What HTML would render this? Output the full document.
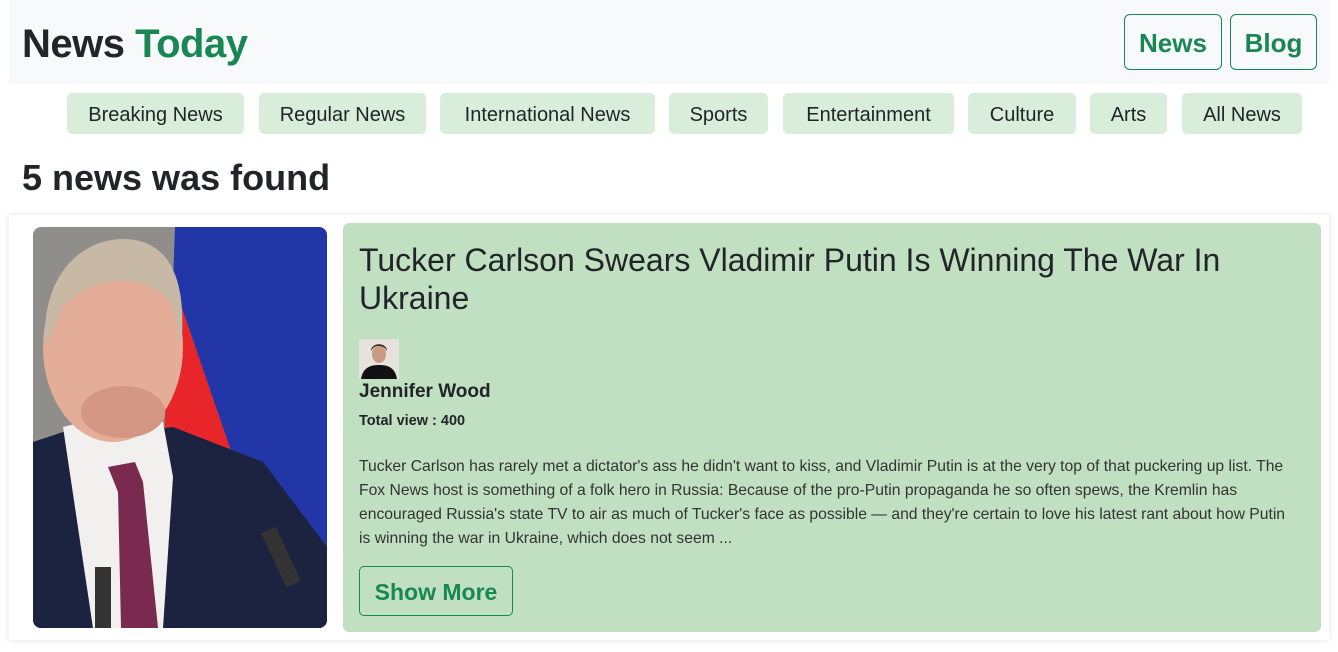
<!DOCTYPE html>
<html><head><meta charset="utf-8"><style>
*{margin:0;padding:0;box-sizing:border-box}
body{width:1338px;height:652px;background:#fff;font-family:"Liberation Sans",sans-serif;color:#212529;position:relative;overflow:hidden}
.hdr{position:absolute;left:9px;top:0;width:1320px;height:84px;background:#f8f9fa}
.logo{position:absolute;left:22px;top:22px;font-size:40px;font-weight:bold;letter-spacing:-0.5px}
.logo span{color:#198754}
.nb{position:absolute;top:14px;height:56px;border:1px solid #198754;border-radius:6px;color:#198754;font-weight:bold;font-size:26px;display:flex;align-items:center;justify-content:center;padding-top:2px}
.pill{position:absolute;top:93px;height:41px;background:#d9eddb;border-radius:5px;font-size:20px;display:flex;align-items:center;justify-content:center;white-space:nowrap;padding-top:3px}
.h{position:absolute;left:22px;top:157px;font-size:36px;font-weight:bold}
.card{position:absolute;left:9px;top:215px;width:1320px;height:425px;background:#fff;box-shadow:0 0 6px rgba(0,0,0,.12)}
.img{position:absolute;left:33px;top:227px;width:294px;height:401px;border-radius:8px;overflow:hidden}
.panel{position:absolute;left:343px;top:223px;width:978px;height:409px;background:#c1e0c1;border-radius:6px}
.t{position:absolute;left:359px;top:241px;font-size:32px;line-height:38px;width:940px}
.av{position:absolute;left:359px;top:339px;width:40px;height:40px;overflow:hidden}
.nm{position:absolute;left:359px;top:381px;font-size:19px;font-weight:bold}
.tv{position:absolute;left:359px;top:413px;font-size:14.5px;font-weight:bold}
.p{position:absolute;left:359px;top:455px;font-size:15.7px;line-height:24px;white-space:nowrap;color:#333}
.sm{position:absolute;left:359px;top:566px;width:154px;height:50px;border:1px solid #198754;border-radius:5px;color:#198754;font-size:23px;font-weight:bold;display:flex;align-items:center;justify-content:center;padding-top:2px}
</style></head><body>
<div class="hdr"></div>
<div class="logo">News <span>Today</span></div>
<div class="nb" style="left:1124px;width:98px">News</div>
<div class="nb" style="left:1230px;width:87px">Blog</div>
<div class="pill" style="left:67px;width:177px">Breaking News</div>
<div class="pill" style="left:259px;width:167px">Regular News</div>
<div class="pill" style="left:440px;width:215px">International News</div>
<div class="pill" style="left:669px;width:99px">Sports</div>
<div class="pill" style="left:783px;width:171px">Entertainment</div>
<div class="pill" style="left:968px;width:108px">Culture</div>
<div class="pill" style="left:1090px;width:77px">Arts</div>
<div class="pill" style="left:1182px;width:120px">All News</div>
<div class="h">5 news was found</div>
<div class="card"></div>
<div class="img"><svg width="294" height="401" viewBox="0 0 294 401">
<rect width="294" height="401" fill="#8f8e8b"/>
<polygon points="142,0 294,0 294,401 230,401 200,230 140,55" fill="#2236a8"/>
<polygon points="140,55 200,230 225,240 140,215" fill="#e8262a"/>
<polygon points="138,55 200,230 130,235" fill="#e8262a"/>
<path d="M0,215 L60,195 L100,205 L140,200 L230,235 L294,320 L294,401 L0,401Z" fill="#1c2340"/>
<path d="M30,200 L70,190 L130,195 L140,250 L130,401 L60,401 Z" fill="#f2f0ee"/>
<path d="M75,240 L102,235 L110,255 L125,401 L88,401 L85,265 Z" fill="#7a2a4e"/>
<ellipse cx="80" cy="120" rx="70" ry="95" fill="#e4ad98"/>
<path d="M12,120 C8,40 55,12 90,12 C135,12 155,50 148,120 L140,80 C120,45 60,45 30,80 Z" fill="#c8b8a6"/>
<ellipse cx="90" cy="185" rx="42" ry="26" fill="#d39783"/>
<rect x="62" y="340" width="16" height="61" fill="#333"/>
<rect x="240" y="300" width="16" height="60" fill="#333" transform="rotate(-25 248 330)"/>
</svg></div>
<div class="panel"></div>
<div class="t">Tucker Carlson Swears Vladimir Putin Is Winning The War In<br>Ukraine</div>
<div class="av"><svg width="40" height="40"><rect width="40" height="40" fill="#e6e2de"/><path d="M2,40 C4,28 12,26 20,26 C28,26 36,28 38,40Z" fill="#111"/><ellipse cx="20" cy="15" rx="7" ry="9" fill="#c99a84"/><path d="M12,12 C12,3 28,3 28,12 L26,9 C22,6 16,6 14,9Z" fill="#2a1e18"/></svg></div>
<div class="nm">Jennifer Wood</div>
<div class="tv">Total view : 400</div>
<div class="p">Tucker Carlson has rarely met a dictator's ass he didn't want to kiss, and Vladimir Putin is at the very top of that puckering up list. The<br>Fox News host is something of a folk hero in Russia: Because of the pro-Putin propaganda he so often spews, the Kremlin has<br>encouraged Russia's state TV to air as much of Tucker's face as possible — and they're certain to love his latest rant about how Putin<br>is winning the war in Ukraine, which does not seem ...</div>
<div class="sm">Show More</div>
</body></html>
